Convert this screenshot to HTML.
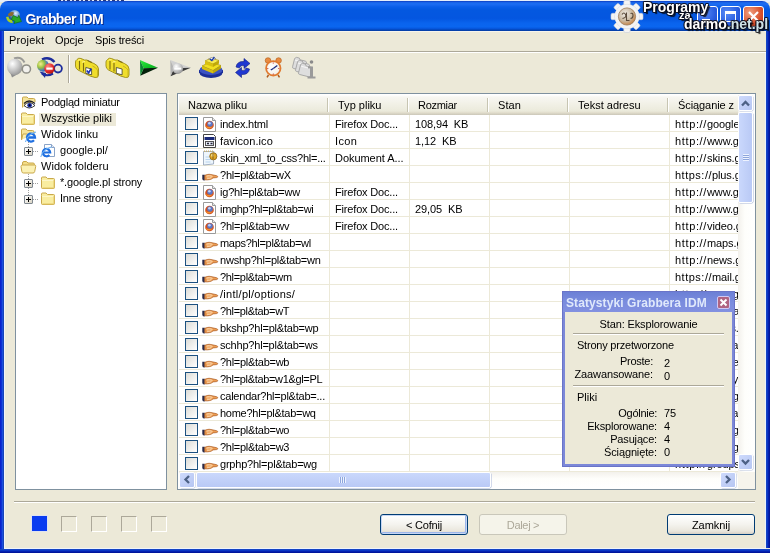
<!DOCTYPE html>
<html lang="pl"><head><meta charset="utf-8"><title>Grabber IDM</title>
<style>
*{box-sizing:border-box;margin:0;padding:0}
html,body{width:770px;height:553px;overflow:hidden;background:#ece9d8}
body{position:relative;font-family:"Liberation Sans","DejaVu Sans",sans-serif;font-size:11px;color:#000;line-height:13px}
.abs{position:absolute}
#win{position:absolute;left:0;top:0;width:770px;height:553px;background:#ece9d8;overflow:hidden;will-change:transform}
#topline{position:absolute;left:0;top:0;width:770px;height:2px;background:#e6eefa}
#topline i{position:absolute;left:58px;top:0;width:66px;height:1px;background:repeating-linear-gradient(to right,#26367a 0 3px,#dfe6f6 3px 5px,#3a4a8a 5px 7px,#e6eefa 7px 9px)}
#title{position:absolute;left:0;top:1px;width:770px;height:30px;border-radius:8px 8px 0 0;
background:linear-gradient(to bottom,#0c3cc0 0%,#1c6cf0 6%,#1a6af0 12%,#0a5ee8 20%,#0458e0 30%,#0456e0 58%,#0a64ee 74%,#0a66f0 86%,#0656dc 92%,#0444b4 97%,#033aa0 100%)}
#title .txt{position:absolute;left:25.500px;top:9.500px;font-weight:bold;font-size:14px;line-height:16px;color:#fff;text-shadow:1px 1px 0 #0a2a8a;white-space:nowrap}
#bl{position:absolute;left:0;top:31px;width:5px;height:517px;background:linear-gradient(to right,#0a22cc 0 1px,#0c32d4 1px 2px,#1c4edc 2px 3px,#1844b8 3px 4px,#f0f4fa 4px 5px)}
#br{position:absolute;right:0;top:31px;width:5px;height:517px;background:linear-gradient(to right,#eaf0fa 0 1px,#1444c4 1px 2px,#0a36c4 2px 3px,#0420b0 3px 4px,#00169c 4px 5px)}
#bb{position:absolute;left:0;bottom:0;width:770px;height:5px;background:linear-gradient(to bottom,transparent 0 1px,#1444c4 1px 2px,#0a36c4 2px 3px,#0420b0 3px 4px,#00169c 4px 5px)}
#bb:before{content:"";position:absolute;left:4px;top:0;width:762px;height:1px;background:#f0f4fa}
#bb:after{content:"";position:absolute;left:0;top:0;width:4px;height:1px;background:linear-gradient(to right,#0a22cc 0 1px,#0c32d4 1px 2px,#1c4edc 2px 3px,#1844b8 3px 4px)}
#menu{position:absolute;left:4px;top:31px;width:762px;height:20px;background:#ece9d8;border-top:1px solid #f6f4ec}
#menu>span{position:absolute;top:2px;font-size:11px;white-space:nowrap}
.hl1{position:absolute;height:1px;background:#aca899}
.hl2{position:absolute;height:1px;background:#fff}
.panel{position:absolute;background:#fff;border:1px solid #7f919f}
.trow{position:absolute;left:0;height:16px;white-space:nowrap}
.trow .t{position:absolute;top:1px;line-height:14px;font-size:11px;padding:0 2px}
.ti{position:absolute}
.t{position:absolute;height:13px;line-height:13px;padding:0 4px 0 2px;margin-top:1px;white-space:nowrap}
.t.sel:before{content:"";position:absolute;left:0;top:1px;width:100%;height:13px;background:#ece9d8;z-index:-1}
#tree{z-index:0}
.pm{position:absolute;width:9px;height:9px;border:1px solid #808890;border-radius:1px;background:linear-gradient(135deg,#fff,#d9d4c4)}
.pm:before{content:"";position:absolute;left:1px;top:3px;width:5px;height:1px;background:#000}
.pm:after{content:"";position:absolute;left:3px;top:1px;width:1px;height:5px;background:#000}
.dv{position:absolute;width:1px;background:repeating-linear-gradient(to bottom,#a0a0a0 0 1px,transparent 1px 2px)}
.dh{position:absolute;height:1px;background:repeating-linear-gradient(to right,#a0a0a0 0 1px,transparent 1px 2px)}
.row{position:absolute;left:0;width:559px;height:17px;border-bottom:1px solid #ece9d8}
.cb{position:absolute;left:6px;top:2px;width:13px;height:13px;border:1px solid #1c5180;background:linear-gradient(135deg,#dcdcd7,#fff)}
.fi{position:absolute;left:23px;top:1px}
.c{position:absolute;top:3px;line-height:13px;white-space:pre;overflow:hidden}
.c1{left:41px;width:108px}.c2{left:156px;width:73px}.c3{left:236px;width:73px}.c6{left:496px;width:62.500px}
.vl{position:absolute;top:0;width:1px;background:#ece9d8}
.hdr{position:absolute;left:0;top:0;height:20px;width:559px;background:linear-gradient(to bottom,#fff 0,#f8f7f2 10%,#ebeadb 80%,#e2decd 88%,#d6d2c2 94%,#cbc7b8 100%)}
.hdr>span{position:absolute;top:4px;white-space:nowrap}
.hdr i{position:absolute;top:3px;height:14px;width:2px;border-left:1px solid #c7c5b2;border-right:1px solid #fff}
.btn{position:absolute;height:21px;border:1px solid #003c74;border-radius:3px;background:linear-gradient(to bottom,#fff,#f4f3ee 50%,#e9e6dc 85%,#d6d0c5);text-align:center;line-height:20px;font-size:11px}
.sq{position:absolute;top:516px;width:16px;height:16px;border:1px solid;border-color:#aca899 #fff #fff #aca899}

.sbtn{position:absolute;width:15px;height:15px;border-radius:2px;background:linear-gradient(135deg,#cedafc,#b6c6f2);border:1px solid #fff;box-shadow:.5px .5px 0 #b8c4e0}
.sbtn svg{position:absolute;left:0;top:0}
.vtrack{position:absolute;left:559px;top:0;width:17px;height:377px;background:linear-gradient(to right,#f3f1ec,#fefefb 40%,#fff)}
.htrack{position:absolute;left:0;top:377px;width:559px;height:17px;background:linear-gradient(to bottom,#f3f1ec,#fefefb 40%,#fff)}
.thumb{position:absolute;border-radius:2px;border:1px solid #fff;background:linear-gradient(to right,#cad8fc,#b9c9f5);box-shadow:.5px .5px 0 #a8b6d8}
#pop{position:absolute;left:562px;top:291px;width:173px;height:176px;background:#7c88d8;border:1px solid #6a74c8}
#pop .cap{position:absolute;left:0;top:0;width:171px;height:20px;background:linear-gradient(to bottom,#6c80d6,#7a8cde 50%,#8290e0)}
#pop .cap b{position:absolute;left:3px;top:4px;font-size:12px;line-height:14px;color:#dfe8fb;white-space:nowrap}
#pop .body{position:absolute;left:2px;top:20px;width:167px;height:152px;background:#ece9d8}
#pop .x{position:absolute;left:154px;top:4px;width:13px;height:13px;border:1px solid #cfc8f4;border-radius:2px;background:#b06482}
.pl{position:absolute;white-space:nowrap;line-height:13px}
.pr{position:absolute;white-space:nowrap;line-height:13px;text-align:right}
.wb{position:absolute;top:6px;width:21px;height:21px;border:1px solid #fff;border-radius:3px;background:radial-gradient(circle at 30% 30%,#5a8cf6,#2a5ee0 60%,#1c48c4)}
.wm{position:absolute;z-index:6;font-weight:bold;color:#fff;white-space:nowrap;text-shadow:1px 0 0 rgba(10,10,20,.75),-1px 0 0 rgba(10,10,20,.75),0 1px 0 rgba(10,10,20,.75),0 -1px 0 rgba(10,10,20,.75),1px 1px 0 rgba(10,10,20,.6),-1px -1px 0 rgba(10,10,20,.5),1px -1px 0 rgba(10,10,20,.5),-1px 1px 0 rgba(10,10,20,.5),2px 2px 1px rgba(0,0,0,.8)}
</style></head><body>
<div id="win">
<div id="topline"><i></i></div>
<div id="title"><div class="txt"><span style="letter-spacing:-0.583px">Grabber IDM</span></div></div>

<div class="wb" style="left:697px"><i class="abs" style="left:4px;top:12px;width:8px;height:3px;background:#fff"></i></div>
<div class="wb" style="left:720px"><i class="abs" style="left:4px;top:4px;width:11px;height:11px;border:1px solid #fff;border-top-width:3px"></i></div>
<div class="wb" style="left:743px;background:radial-gradient(circle at 30% 30%,#f0a080,#d8502c 60%,#b83818)"><svg width="19" height="19" viewBox="0 0 19 19"><path d="M5 5l9 9M14 5l-9 9" stroke="#fff" stroke-width="2.200"/></svg></div>
<svg class="abs" style="left:610px;top:0;z-index:5" width="34" height="33" viewBox="-17 -16.500 34 33">
<defs><radialGradient id="gCoin" cx=".4" cy=".35" r=".75"><stop offset="0" stop-color="#f2efe8"/><stop offset=".55" stop-color="#c9b8a0"/><stop offset=".85" stop-color="#c88a50"/><stop offset="1" stop-color="#8a5a30"/></radialGradient></defs>
<g fill="#f4f4f4" stroke="#c8ccd8" stroke-width=".6">
<g id="teeth"><rect x="-3.200" y="-16" width="6.400" height="32" rx="1.500"/><rect x="-16" y="-3.200" width="32" height="6.400" rx="1.500"/></g>
<use href="#teeth" transform="rotate(45)"/>
<circle r="12.200"/></g>
<circle r="12" fill="#f4f4f4"/>
<circle r="8.600" fill="url(#gCoin)" stroke="#9a7a58" stroke-width=".8"/>
<path d="M-5-2q2-3 3.500 0t-3 4M-.5-4v8l3 0M3.500-3q2.500-1 2.500 2t-2.500 3" stroke="#5a4a3a" stroke-width="1.100" fill="none"/>
</svg>
<span class="wm" style="left:643px;top:-1px;font-size:14px;line-height:16px">Programy</span>
<span class="wm" style="left:679px;top:10px;font-size:11px;line-height:11px">za</span>
<span class="wm" style="left:684px;top:16px;font-size:14px;line-height:16px">darmo<span style="color:#cfe2e6">.net.pl</span></span>
<svg class="abs" style="left:5px;top:9px" width="18" height="18" viewBox="0 0 18 18">
<defs><radialGradient id="gTi" cx=".6" cy=".3" r=".7"><stop offset="0" stop-color="#e8f4ff"/><stop offset=".4" stop-color="#7aa8d8"/><stop offset="1" stop-color="#2a5088"/></radialGradient></defs>
<circle cx="9.500" cy="6.500" r="5.500" fill="url(#gTi)"/>
<path d="M3 5q3-3 6-1.500l-1 3q-3 1-5 0z" fill="#8a6a30"/>
<path d="M1 8q1 6 7 6l-1-3q-3 0-3.500-3.500z" fill="#a8d020"/>
<path d="M7 8h5v-2.500l5 4.500-6 5v-2.500h-4z" fill="#28a828" stroke="#107010" stroke-width=".6" transform="rotate(25 11 10)"/>
</svg>
<div id="bl"></div><div id="br"></div><div id="bb"></div>
<div id="menu"><span style="left:5px"><span style="letter-spacing:0.150px">Projekt</span></span><span style="left:51px"><span style="letter-spacing:-0.050px">Opcje</span></span><span style="left:91px"><span style="letter-spacing:-0.159px">Spis treści</span></span></div>
<div class="hl1" style="left:4px;top:51px;width:762px"></div><div class="hl2" style="left:4px;top:52px;width:762px"></div>

<!-- toolbar -->
<svg class="abs" style="left:0;top:53px" width="340" height="36" viewBox="0 53 340 36">
<defs>
<radialGradient id="gSph" cx=".35" cy=".3" r=".8"><stop offset="0" stop-color="#fff"/><stop offset=".5" stop-color="#c8c8c8"/><stop offset="1" stop-color="#8c8c8c"/></radialGradient>
<radialGradient id="gGlobe" cx=".3" cy=".35" r=".8"><stop offset="0" stop-color="#f4f090"/><stop offset=".4" stop-color="#9ac040"/><stop offset=".75" stop-color="#3a70c8"/><stop offset="1" stop-color="#203a90"/></radialGradient>
<radialGradient id="gRed" cx=".35" cy=".3" r=".8"><stop offset="0" stop-color="#ff8a80"/><stop offset=".6" stop-color="#e02828"/><stop offset="1" stop-color="#a81010"/></radialGradient>
<linearGradient id="gGreen" x1="0" y1="0" x2="1" y2="1"><stop offset="0" stop-color="#30f040"/><stop offset="1" stop-color="#00a818"/></linearGradient>
<radialGradient id="gClock" cx=".4" cy=".4" r=".7"><stop offset="0" stop-color="#fff"/><stop offset=".8" stop-color="#f4f0e8"/><stop offset="1" stop-color="#e8c8a0"/></radialGradient>
<g id="fold"><path d="M0 1.500l1.500-1.500h3l1 1.500h5.500q1.500 0 1.500 1.500v7q0 1.500-1.500 1.500h-9.500q-1.500 0-1.500-1.500z" fill="#f2da2a" stroke="#a88c10" stroke-width=".8"/><path d="M1 3.200h10.500" stroke="#fbf08a" stroke-width="1"/></g>
<g id="gfold"><path d="M0 1.500l1.500-1.500h3l1 1.500h5.500q1.500 0 1.500 1.500v7q0 1.500-1.500 1.500h-9.500q-1.500 0-1.500-1.500z" fill="#dedede" stroke="#a0a0a0" stroke-width=".8"/><path d="M1 3.200h10.500" stroke="#f6f6f6" stroke-width="1"/></g>
</defs>
<!-- 1 gray globe + magnifier -->
<path d="M9.500 71l2.500 6.500 5-3z" fill="#8e8e8e"/>
<path d="M14 58.500q7-2.500 10.500 4" stroke="#9a9a96" stroke-width="2" fill="none"/><ellipse cx="14.800" cy="67" rx="7.800" ry="8.300" fill="url(#gSph)"/>
<circle cx="26.400" cy="69" r="4.100" fill="#f2f1ec" stroke="#8e8e86" stroke-width="1.500"/>
<!-- 2 globe + stop + magnifier -->
<path d="M42 59.500q7-3.500 12.500 2.500" stroke="#1c2c9c" stroke-width="2.400" fill="none"/>
<circle cx="43" cy="65.800" r="6" fill="url(#gGlobe)"/>
<circle cx="58" cy="68.600" r="3.900" fill="#e8e6dc" stroke="#1c2c9c" stroke-width="1.800"/>
<path d="M42 73.500q5 3.500 11 0" stroke="#1c2c9c" stroke-width="2.200" fill="none"/>
<path d="M39.500 71.500l5.500 6.500 1-5z" fill="#1c2c9c"/>
<circle cx="49.500" cy="68.500" r="5.200" fill="url(#gRed)"/>
<rect x="46.300" y="67.500" width="6.400" height="2.200" fill="#fff"/>
<!-- separator -->
<rect x="68" y="55" width="1" height="28" fill="#aca899"/><rect x="69" y="55" width="1" height="28" fill="#fff"/>
<!-- 3 folders + check -->
<g id="stack">
<path d="M77 59.500q1.500-2 4-1l3.500 1.500 2.500 0 3 2 4 1.500q4.500 2 4.500 5.500v6q0 3-3.500 2.500l-5-1.500-4-2-4-2-4-2q-2.500-1.500-2.500-4v-4q0-1.500 1.500-2.500z" fill="#f0de2c" stroke="#9c8c14" stroke-width=".9"/>
<path d="M79.500 61v8.500M83.500 63v8.500M87.500 60.500l4.500 2" stroke="#7c6c10" stroke-width="1.100" fill="none"/>
<path d="M78 60.500q1-1.500 3-.8M82 62.500q1-1.500 3-.8" stroke="#fbf392" stroke-width="1" fill="none"/>
<path d="M92.500 66q3.500 1.500 5 4v6" stroke="#c8b41c" stroke-width="1" fill="none"/>
</g>
<path d="M85.800 67.500l5.800 1.500v5.800l-5.800-1.500z" fill="#fff" stroke="#3a3a30" stroke-width=".8"/>
<path d="M86.800 70.500l1.800 2.300 2.700-4.300" stroke="#1c34b8" stroke-width="1.600" fill="none"/>
<!-- 4 folders + square -->
<use href="#stack" transform="translate(30.500,0)"/>
<path d="M116.300 67.500l5.800 1.500v5.800l-5.800-1.500z" fill="#fff" stroke="#3a3a30" stroke-width=".8"/>
<!-- 5 play green -->
<path d="M140 60L158 67.800 143.700 68.200z" fill="url(#gGreen)"/>
<path d="M143.700 68.200L158 67.800 140.300 75.800z" fill="#04200a"/>
<path d="M140 60L143.700 68.200 140.300 75.800z" fill="#0a8a30"/>
<!-- 6 play gray -->
<path d="M170.300 60L190.800 67.800 174 68.200z" fill="#d0d0d0"/>
<path d="M174 68.200L190.800 67.800 170.500 76.300z" fill="#3a3a3a"/>
<path d="M170.300 60L174 68.200 170.500 76.300z" fill="#b4b4b4"/>
<circle cx="177.800" cy="68.600" r="5.300" fill="url(#gSph)"/>
<rect x="174.300" y="67.600" width="7" height="2" fill="#fff"/>
<!-- 7 stack on blue base -->
<ellipse cx="211" cy="73" rx="11.500" ry="5" fill="#1c2f98"/>
<path d="M199.500 70v3M222.500 70v3" stroke="#1c2f98"/>
<ellipse cx="211" cy="70" rx="11.500" ry="5" fill="#3a52c4"/>
<path d="M202 66l8-4 11 3.500-8 5z" fill="#f2e020" stroke="#a89010" stroke-width=".7"/>
<path d="M202 66v3l11 4.500v-3z" fill="#d8c010"/><path d="M213 70.500v3l8-5v-3z" fill="#c0a808"/>
<path d="M205 61l6-3 8 2.500-6 3.500z" fill="#f8ec50" stroke="#a89010" stroke-width=".7"/>
<path d="M205 61v3l8 3v-3z" fill="#d8c010"/><path d="M213 64v3l6-3.500v-3z" fill="#c0a808"/>
<path d="M208.500 59l3.500-1.500 4 1.200-3.500 2z" fill="#fff" stroke="#666" stroke-width=".5"/>
<path d="M210 59l1.800 1.600 2.600-3.600" stroke="#1838a8" stroke-width="1.300" fill="none"/>
<!-- 8 refresh -->
<path d="M236 67q1-6 8-5.500v-3l6 5-6 5v-3q-4-.5-4.500 2.500z" fill="#2038d0" stroke="#101c80" stroke-width=".6"/>
<path d="M249.500 69q-1 6-8 5.500v3l-6-5 6-5v3q4 .5 4.500-2.500z" fill="#2038d0" stroke="#101c80" stroke-width=".6"/>
<!-- 9 alarm clock -->
<circle cx="268" cy="60.500" r="2.800" fill="#e88a40" stroke="#b05a18" stroke-width=".6"/>
<circle cx="278.600" cy="60.500" r="2.800" fill="#e88a40" stroke="#b05a18" stroke-width=".6"/>
<path d="M268.500 75l-1.500 2.300M278 75l1.500 2.300" stroke="#b05a18" stroke-width="1.500"/>
<circle cx="273.300" cy="68.300" r="7.200" fill="url(#gClock)" stroke="#e07a30" stroke-width="1.800"/>
<path d="M273.300 68.500l4-3" stroke="#1a2a80" stroke-width="1.300"/><path d="M273.300 68.500l-2.500 1.500" stroke="#1a2a80" stroke-width="1.300"/>
<circle cx="273.300" cy="63" r=".6" fill="#c02020"/><circle cx="273.300" cy="74" r=".6" fill="#c02020"/><circle cx="267.800" cy="68.500" r=".6" fill="#c02020"/><circle cx="278.800" cy="68.500" r=".6" fill="#c02020"/>
<!-- 10 gray folders + i -->
<g transform="translate(295,57) rotate(14)"><use href="#gfold"/></g>
<g transform="translate(298,60) rotate(14)"><use href="#gfold"/></g>
<g transform="translate(301,63) rotate(14)"><use href="#gfold"/></g>
<circle cx="311.500" cy="62" r="1.800" fill="#8a8a8a"/>
<path d="M308 66.500h5v10h2.500v2h-8v-2h2.500v-8h-2z" fill="#9a9a9a"/>
</svg>


<!-- tree -->
<div class="panel" id="tree" style="left:15px;top:93px;width:152px;height:397px"><div class="abs" style="left:1px;top:1px;width:149px;height:394px">
<svg class="ti" style="left:4px;top:0px" width="16" height="16" viewBox="0 0 16 16"><path d="M1.500 12.500v-9.500q0-1 1-1h3.500l1.500 1.500h5q1.500 0 1.500 1.500v2" fill="#f5e49a" stroke="#c9a84a"/><path d="M3 10.500q5-6 11 0q-6 5-11 0z" fill="#fff" stroke="#222" stroke-width=".9"/><circle cx="8.600" cy="10.200" r="2.300" fill="#1c2fa8"/><circle cx="8.600" cy="10.200" r="1" fill="#000"/><path d="M3 8.500q5-5 11 0" stroke="#222" fill="none" stroke-width="1.200"/></svg>
<span class="t" style="left:22px;top:0px"><span style="letter-spacing:-0.241px">Podgląd miniatur</span></span>
<svg class="ti" style="left:3px;top:16px" width="16" height="16" viewBox="0 0 16 16"><path d="M1.500 4.500v-1.500q0-1 1-1h3.500l1.500 1.500h6q1 0 1 1v8q0 1-1 1h-11q-1 0-1-1z" fill="#f9eda0" stroke="#c9a84a"/><path d="M2 5.500h12" stroke="#fdf6c8"/><path d="M14 5v7.500q0 .5-.5.500h-11" stroke="#e3c766" fill="none"/></svg>
<span class="t sel" style="left:22px;top:16px"><span style="letter-spacing:-0.048px">Wszystkie pliki</span></span>
<svg class="ti" style="left:3px;top:32px" width="17" height="16" viewBox="0 0 17 16"><path d="M1.500 12.500v-9.500q0-1 1-1h3.500l1.500 1.500h5q1.500 0 1.500 1.500v3" fill="#f5e49a" stroke="#c9a84a"/><path d="M1.500 13l1.500-6h4" fill="#fbf1b4" stroke="#c9a84a"/><circle cx="11" cy="10.500" r="4.300" fill="#fff" opacity=".85"/><path d="M14 13.200A4 4 0 1 1 15 10.500L7.500 10.500" stroke="#1f6fe0" stroke-width="2.300" fill="none"/><path d="M5.500 15q1.500-7.500 10.500-10" stroke="#6ab0f4" fill="none" stroke-width="1.100"/></svg>
<span class="t" style="left:22px;top:32px"><span style="letter-spacing:0.086px">Widok linku</span></span>
<span class="dv" style="left:11px;top:47px;height:5px"></span><span class="dh" style="left:16px;top:56px;width:6px"></span>
<span class="pm" style="left:7px;top:52px"></span>
<svg class="ti" style="left:23px;top:48px" width="16" height="16" viewBox="0 0 16 16"><path d="M4.500 1.500h7l3 3v9h-10z" fill="#fff" stroke="#8aa4c8"/><path d="M11.500 1.500v3h3" fill="#dfe8f6" stroke="#8aa4c8"/><circle cx="6.500" cy="9.500" r="4" fill="#fff" opacity=".85"/><path d="M9.300 12A3.700 3.700 0 1 1 10.200 9.500L3 9.500" stroke="#1f6fe0" stroke-width="2.200" fill="none"/><path d="M.8 14q1.500-7.500 10.500-10" stroke="#6ab0f4" fill="none" stroke-width="1.100"/></svg>
<span class="t" style="left:41px;top:48px"><span style="letter-spacing:0.008px">google.pl/</span></span>
<svg class="ti" style="left:3px;top:64px" width="17" height="16" viewBox="0 0 17 16"><path d="M2.500 12.500v-8.500q0-1.500 1.500-1.500h2.500l1.500 1.500h5q1.500 0 1.500 1.500v1" fill="#f3dc86" stroke="#c9a84a"/><path d="M1 7.500q0-1.500 1.500-1.500h12q1.500 0 1.200 1.500l-1 5q-.3 1.500-1.700 1.500h-9.500q-1.500 0-1.700-1.500z" fill="#fbf1b4" stroke="#c9a84a"/></svg>
<span class="t" style="left:22px;top:64px"><span style="letter-spacing:0.026px">Widok folderu</span></span>
<span class="dv" style="left:11px;top:79px;height:5px"></span><span class="dh" style="left:16px;top:88px;width:6px"></span>
<span class="pm" style="left:7px;top:84px"></span>
<svg class="ti" style="left:23px;top:80px" width="16" height="16" viewBox="0 0 16 16"><path d="M1.500 4.500v-1.500q0-1 1-1h3.500l1.500 1.500h6q1 0 1 1v8q0 1-1 1h-11q-1 0-1-1z" fill="#f9eda0" stroke="#c9a84a"/><path d="M2 5.500h12" stroke="#fdf6c8"/><path d="M14 5v7.500q0 .5-.5.500h-11" stroke="#e3c766" fill="none"/></svg>
<span class="t" style="left:41px;top:80px"><span style="letter-spacing:-0.156px">*.google.pl strony</span></span>
<span class="dv" style="left:11px;top:93px;height:7px"></span><span class="dh" style="left:16px;top:104px;width:6px"></span>
<span class="pm" style="left:7px;top:100px"></span>
<svg class="ti" style="left:23px;top:96px" width="16" height="16" viewBox="0 0 16 16"><path d="M1.500 4.500v-1.500q0-1 1-1h3.500l1.500 1.500h6q1 0 1 1v8q0 1-1 1h-11q-1 0-1-1z" fill="#f9eda0" stroke="#c9a84a"/><path d="M2 5.500h12" stroke="#fdf6c8"/><path d="M14 5v7.500q0 .5-.5.500h-11" stroke="#e3c766" fill="none"/></svg>
<span class="t" style="left:41px;top:96px"><span style="letter-spacing:-0.202px">Inne strony</span></span>
</div></div>

<!-- list -->
<div class="panel" id="list" style="left:177px;top:93px;width:579px;height:397px;overflow:hidden"><div class="abs" style="left:1px;top:1px;width:576px;height:394px;overflow:hidden">
 <div class="hdr">
  <span style="left:9px"><span style="letter-spacing:-0.019px">Nazwa pliku</span></span><span style="left:159px"><span style="letter-spacing:0.009px">Typ pliku</span></span><span style="left:239px"><span style="letter-spacing:-0.308px">Rozmiar</span></span><span style="left:319px"><span style="letter-spacing:0.065px">Stan</span></span><span style="left:399px"><span style="letter-spacing:0.019px">Tekst adresu</span></span><span style="left:499px"><span style="letter-spacing:-0.080px">Ściąganie z</span></span>
  <i style="left:148px"></i><i style="left:228px"></i><i style="left:308px"></i><i style="left:388px"></i><i style="left:488px"></i>
 </div>
 <div class="vl" style="left:150px;top:20px;height:357px"></div><div class="vl" style="left:230px;top:20px;height:357px"></div><div class="vl" style="left:310px;top:20px;height:357px"></div><div class="vl" style="left:390px;top:20px;height:357px"></div><div class="vl" style="left:490px;top:20px;height:357px"></div>
 <div id="rows" class="abs" style="left:0;top:20px;width:559px;height:357px;overflow:hidden">
<div class="row" style="top:0px"><span class="cb"></span><svg class="fi" width="16" height="16" viewBox="0 0 16 16"><path d="M1.500 1.500h9l3 3v11h-12z" fill="#fff" stroke="#9a9a9a"/><path d="M10.500 1.500v3h3" fill="#e8e8e8" stroke="#9a9a9a"/><circle cx="7.500" cy="9" r="4.300" fill="#d2501e"/><circle cx="8" cy="8" r="2.800" fill="#5a78c8"/><circle cx="7.400" cy="7.200" r="1.300" fill="#c4d2f2"/><path d="M3.300 10c1 3 5.500 3.500 8 0c-1.500 1.200-5.500 1.500-8 0z" fill="#f09030"/></svg><span class="c c1"><span style="letter-spacing:-0.224px">index.html</span></span><span class="c c2"><span style="letter-spacing:-0.172px">Firefox Doc...</span></span><span class="c c3"><span style="letter-spacing:-0.114px">108,94  KB</span></span><span class="c c6"><span style="letter-spacing:0.638px">http://</span><span style="letter-spacing:-.1px">google.pl/</span></span></div>
<div class="row" style="top:17px"><span class="cb"></span><svg class="fi" width="16" height="16" viewBox="0 0 16 16"><path d="M1.500 1.500h10l2 2v11h-12z" fill="#fff" stroke="#444"/><rect x="2.500" y="4" width="10" height="3" fill="#1a2a7a"/><rect x="3.500" y="8.500" width="8" height="4" fill="#e4e9f6" stroke="#555"/><path d="M5 10.500h2M8.500 10.500h2" stroke="#223" stroke-width="1.500"/></svg><span class="c c1"><span style="letter-spacing:0.083px">favicon.ico</span></span><span class="c c2"><span style="letter-spacing:0.351px">Icon</span></span><span class="c c3"><span style="letter-spacing:-0.100px">1,12  KB</span></span><span class="c c6"><span style="letter-spacing:0.638px">http://</span><span style="letter-spacing:-.1px">www.google.pl/</span></span></div>
<div class="row" style="top:34px"><span class="cb"></span><svg class="fi" width="16" height="16" viewBox="0 0 16 16"><path d="M1.500 1.500h10.500l-.5 12.500-10 1z" fill="#eef6fd" stroke="#9aa8bc" stroke-width=".9"/><path d="M2 1.300h10" stroke="#c8b070" stroke-width="1.400" stroke-dasharray="1 1"/><path d="M3.500 7h4M3.500 9.500h6M3.500 12h5" stroke="#b8d4ee" stroke-width="1"/><circle cx="11.300" cy="6.300" r="3.600" fill="#e0a828" stroke="#8a6214" stroke-width=".8"/><circle cx="10.500" cy="5.300" r="1.500" fill="#f8e088"/><path d="M11 3.500v5.500" stroke="#7a5410" stroke-width=".9"/></svg><span class="c c1"><span style="letter-spacing:-0.244px">skin_xml_to_css?hl=...</span></span><span class="c c2"><span style="letter-spacing:-0.046px">Dokument A...</span></span><span class="c c6"><span style="letter-spacing:0.638px">http://</span><span style="letter-spacing:-.1px">skins.gmodules.com/</span></span></div>
<div class="row" style="top:51px"><span class="cb"></span><svg class="fi" width="17" height="16" viewBox="0 0 17 16"><path d="M.3 7.800h2.500v5.700q-2.500 0-2.500-1.500z" fill="#2a2a48"/><path d="M2.800 8.300c2-.8 4-1.300 6-.8l5.800 1.200c1.500.4 1.400 1.700 0 1.900l-3.600.3c-1.200 1.600-5 2.200-8.200 1.900z" fill="#ee9c50" stroke="#a8561c" stroke-width=".7"/><path d="M4.500 9.200c2-.6 4-.5 6 .2M5 11.200c1.500.2 3 0 4.500-.5" stroke="#fde6c8" stroke-width=".9" fill="none"/></svg><span class="c c1"><span style="letter-spacing:-0.238px">?hl=pl&amp;tab=wX</span></span><span class="c c6"><span style="letter-spacing:0.496px">https://</span><span style="letter-spacing:-.1px">plus.google.com/</span></span></div>
<div class="row" style="top:68px"><span class="cb"></span><svg class="fi" width="16" height="16" viewBox="0 0 16 16"><path d="M1.500 1.500h9l3 3v11h-12z" fill="#fff" stroke="#9a9a9a"/><path d="M10.500 1.500v3h3" fill="#e8e8e8" stroke="#9a9a9a"/><circle cx="7.500" cy="9" r="4.300" fill="#d2501e"/><circle cx="8" cy="8" r="2.800" fill="#5a78c8"/><circle cx="7.400" cy="7.200" r="1.300" fill="#c4d2f2"/><path d="M3.300 10c1 3 5.500 3.500 8 0c-1.500 1.200-5.500 1.500-8 0z" fill="#f09030"/></svg><span class="c c1"><span style="letter-spacing:-0.211px">ig?hl=pl&amp;tab=ww</span></span><span class="c c2"><span style="letter-spacing:-0.172px">Firefox Doc...</span></span><span class="c c6"><span style="letter-spacing:0.638px">http://</span><span style="letter-spacing:-.1px">www.google.pl/</span></span></div>
<div class="row" style="top:85px"><span class="cb"></span><svg class="fi" width="16" height="16" viewBox="0 0 16 16"><path d="M1.500 1.500h9l3 3v11h-12z" fill="#fff" stroke="#9a9a9a"/><path d="M10.500 1.500v3h3" fill="#e8e8e8" stroke="#9a9a9a"/><circle cx="7.500" cy="9" r="4.300" fill="#d2501e"/><circle cx="8" cy="8" r="2.800" fill="#5a78c8"/><circle cx="7.400" cy="7.200" r="1.300" fill="#c4d2f2"/><path d="M3.300 10c1 3 5.500 3.500 8 0c-1.500 1.200-5.500 1.500-8 0z" fill="#f09030"/></svg><span class="c c1"><span style="letter-spacing:-0.310px">imghp?hl=pl&amp;tab=wi</span></span><span class="c c2"><span style="letter-spacing:-0.172px">Firefox Doc...</span></span><span class="c c3"><span style="letter-spacing:-0.092px">29,05  KB</span></span><span class="c c6"><span style="letter-spacing:0.638px">http://</span><span style="letter-spacing:-.1px">www.google.pl/</span></span></div>
<div class="row" style="top:102px"><span class="cb"></span><svg class="fi" width="16" height="16" viewBox="0 0 16 16"><path d="M1.500 1.500h9l3 3v11h-12z" fill="#fff" stroke="#9a9a9a"/><path d="M10.500 1.500v3h3" fill="#e8e8e8" stroke="#9a9a9a"/><circle cx="7.500" cy="9" r="4.300" fill="#d2501e"/><circle cx="8" cy="8" r="2.800" fill="#5a78c8"/><circle cx="7.400" cy="7.200" r="1.300" fill="#c4d2f2"/><path d="M3.300 10c1 3 5.500 3.500 8 0c-1.500 1.200-5.500 1.500-8 0z" fill="#f09030"/></svg><span class="c c1"><span style="letter-spacing:-0.229px">?hl=pl&amp;tab=wv</span></span><span class="c c2"><span style="letter-spacing:-0.172px">Firefox Doc...</span></span><span class="c c6"><span style="letter-spacing:0.638px">http://</span><span style="letter-spacing:-.1px">video.google.pl/</span></span></div>
<div class="row" style="top:119px"><span class="cb"></span><svg class="fi" width="17" height="16" viewBox="0 0 17 16"><path d="M.3 7.800h2.500v5.700q-2.500 0-2.500-1.500z" fill="#2a2a48"/><path d="M2.800 8.300c2-.8 4-1.300 6-.8l5.800 1.200c1.500.4 1.400 1.700 0 1.900l-3.600.3c-1.200 1.600-5 2.200-8.200 1.900z" fill="#ee9c50" stroke="#a8561c" stroke-width=".7"/><path d="M4.500 9.200c2-.6 4-.5 6 .2M5 11.200c1.500.2 3 0 4.500-.5" stroke="#fde6c8" stroke-width=".9" fill="none"/></svg><span class="c c1"><span style="letter-spacing:-0.301px">maps?hl=pl&amp;tab=wl</span></span><span class="c c6"><span style="letter-spacing:0.638px">http://</span><span style="letter-spacing:-.1px">maps.google.pl/</span></span></div>
<div class="row" style="top:136px"><span class="cb"></span><svg class="fi" width="17" height="16" viewBox="0 0 17 16"><path d="M.3 7.800h2.500v5.700q-2.500 0-2.500-1.500z" fill="#2a2a48"/><path d="M2.800 8.300c2-.8 4-1.300 6-.8l5.800 1.200c1.500.4 1.400 1.700 0 1.900l-3.600.3c-1.200 1.600-5 2.200-8.200 1.900z" fill="#ee9c50" stroke="#a8561c" stroke-width=".7"/><path d="M4.500 9.200c2-.6 4-.5 6 .2M5 11.200c1.500.2 3 0 4.500-.5" stroke="#fde6c8" stroke-width=".9" fill="none"/></svg><span class="c c1"><span style="letter-spacing:-0.215px">nwshp?hl=pl&amp;tab=wn</span></span><span class="c c6"><span style="letter-spacing:0.638px">http://</span><span style="letter-spacing:-.1px">news.google.pl/</span></span></div>
<div class="row" style="top:153px"><span class="cb"></span><svg class="fi" width="17" height="16" viewBox="0 0 17 16"><path d="M.3 7.800h2.500v5.700q-2.500 0-2.500-1.500z" fill="#2a2a48"/><path d="M2.800 8.300c2-.8 4-1.300 6-.8l5.800 1.200c1.500.4 1.400 1.700 0 1.900l-3.600.3c-1.200 1.600-5 2.200-8.200 1.900z" fill="#ee9c50" stroke="#a8561c" stroke-width=".7"/><path d="M4.500 9.200c2-.6 4-.5 6 .2M5 11.200c1.500.2 3 0 4.500-.5" stroke="#fde6c8" stroke-width=".9" fill="none"/></svg><span class="c c1"><span style="letter-spacing:-0.310px">?hl=pl&amp;tab=wm</span></span><span class="c c6"><span style="letter-spacing:0.496px">https://</span><span style="letter-spacing:-.1px">mail.google.com/</span></span></div>
<div class="row" style="top:170px"><span class="cb"></span><svg class="fi" width="17" height="16" viewBox="0 0 17 16"><path d="M.3 7.800h2.500v5.700q-2.500 0-2.500-1.500z" fill="#2a2a48"/><path d="M2.800 8.300c2-.8 4-1.300 6-.8l5.800 1.200c1.500.4 1.400 1.700 0 1.900l-3.600.3c-1.200 1.600-5 2.200-8.200 1.900z" fill="#ee9c50" stroke="#a8561c" stroke-width=".7"/><path d="M4.500 9.200c2-.6 4-.5 6 .2M5 11.200c1.500.2 3 0 4.500-.5" stroke="#fde6c8" stroke-width=".9" fill="none"/></svg><span class="c c1"><span style="letter-spacing:0.287px">/intl/pl/options/</span></span><span class="c c6"><span style="letter-spacing:0.638px">http://</span><span style="letter-spacing:-.1px">www.google.pl/</span></span></div>
<div class="row" style="top:187px"><span class="cb"></span><svg class="fi" width="17" height="16" viewBox="0 0 17 16"><path d="M.3 7.800h2.500v5.700q-2.500 0-2.500-1.500z" fill="#2a2a48"/><path d="M2.800 8.300c2-.8 4-1.300 6-.8l5.800 1.200c1.500.4 1.400 1.700 0 1.900l-3.600.3c-1.200 1.600-5 2.200-8.200 1.900z" fill="#ee9c50" stroke="#a8561c" stroke-width=".7"/><path d="M4.500 9.200c2-.6 4-.5 6 .2M5 11.200c1.500.2 3 0 4.500-.5" stroke="#fde6c8" stroke-width=".9" fill="none"/></svg><span class="c c1"><span style="letter-spacing:-0.322px">?hl=pl&amp;tab=wT</span></span><span class="c c6"><span style="letter-spacing:0.638px">http://</span><span style="letter-spacing:-.1px">translate.google.pl/</span></span></div>
<div class="row" style="top:204px"><span class="cb"></span><svg class="fi" width="17" height="16" viewBox="0 0 17 16"><path d="M.3 7.800h2.500v5.700q-2.500 0-2.500-1.500z" fill="#2a2a48"/><path d="M2.800 8.300c2-.8 4-1.300 6-.8l5.800 1.200c1.500.4 1.400 1.700 0 1.900l-3.600.3c-1.200 1.600-5 2.200-8.200 1.900z" fill="#ee9c50" stroke="#a8561c" stroke-width=".7"/><path d="M4.500 9.200c2-.6 4-.5 6 .2M5 11.200c1.500.2 3 0 4.500-.5" stroke="#fde6c8" stroke-width=".9" fill="none"/></svg><span class="c c1"><span style="letter-spacing:-0.202px">bkshp?hl=pl&amp;tab=wp</span></span><span class="c c6"><span style="letter-spacing:0.638px">http://</span><span style="letter-spacing:-.1px">books.google.pl/</span></span></div>
<div class="row" style="top:221px"><span class="cb"></span><svg class="fi" width="17" height="16" viewBox="0 0 17 16"><path d="M.3 7.800h2.500v5.700q-2.500 0-2.500-1.500z" fill="#2a2a48"/><path d="M2.800 8.300c2-.8 4-1.300 6-.8l5.800 1.200c1.500.4 1.400 1.700 0 1.900l-3.600.3c-1.200 1.600-5 2.200-8.200 1.900z" fill="#ee9c50" stroke="#a8561c" stroke-width=".7"/><path d="M4.500 9.200c2-.6 4-.5 6 .2M5 11.200c1.500.2 3 0 4.500-.5" stroke="#fde6c8" stroke-width=".9" fill="none"/></svg><span class="c c1"><span style="letter-spacing:-0.206px">schhp?hl=pl&amp;tab=ws</span></span><span class="c c6"><span style="letter-spacing:0.638px">http://</span><span style="letter-spacing:-.1px">scholar.google.pl/</span></span></div>
<div class="row" style="top:238px"><span class="cb"></span><svg class="fi" width="17" height="16" viewBox="0 0 17 16"><path d="M.3 7.800h2.500v5.700q-2.500 0-2.500-1.500z" fill="#2a2a48"/><path d="M2.800 8.300c2-.8 4-1.300 6-.8l5.800 1.200c1.500.4 1.400 1.700 0 1.900l-3.600.3c-1.200 1.600-5 2.200-8.200 1.900z" fill="#ee9c50" stroke="#a8561c" stroke-width=".7"/><path d="M4.500 9.200c2-.6 4-.5 6 .2M5 11.200c1.500.2 3 0 4.500-.5" stroke="#fde6c8" stroke-width=".9" fill="none"/></svg><span class="c c1"><span style="letter-spacing:-0.275px">?hl=pl&amp;tab=wb</span></span><span class="c c6"><span style="letter-spacing:0.638px">http://</span><span style="letter-spacing:-.1px">blogsearch.google.pl/</span></span></div>
<div class="row" style="top:255px"><span class="cb"></span><svg class="fi" width="17" height="16" viewBox="0 0 17 16"><path d="M.3 7.800h2.500v5.700q-2.500 0-2.500-1.500z" fill="#2a2a48"/><path d="M2.800 8.300c2-.8 4-1.300 6-.8l5.800 1.200c1.500.4 1.400 1.700 0 1.900l-3.600.3c-1.200 1.600-5 2.200-8.200 1.900z" fill="#ee9c50" stroke="#a8561c" stroke-width=".7"/><path d="M4.500 9.200c2-.6 4-.5 6 .2M5 11.200c1.500.2 3 0 4.500-.5" stroke="#fde6c8" stroke-width=".9" fill="none"/></svg><span class="c c1"><span style="letter-spacing:-0.335px">?hl=pl&amp;tab=w1&amp;gl=PL</span></span><span class="c c6"><span style="letter-spacing:0.638px">http://</span><span style="letter-spacing:-.1px">www.youtube.com/</span></span></div>
<div class="row" style="top:272px"><span class="cb"></span><svg class="fi" width="17" height="16" viewBox="0 0 17 16"><path d="M.3 7.800h2.500v5.700q-2.500 0-2.500-1.500z" fill="#2a2a48"/><path d="M2.800 8.300c2-.8 4-1.300 6-.8l5.800 1.200c1.500.4 1.400 1.700 0 1.900l-3.600.3c-1.200 1.600-5 2.200-8.200 1.900z" fill="#ee9c50" stroke="#a8561c" stroke-width=".7"/><path d="M4.500 9.200c2-.6 4-.5 6 .2M5 11.200c1.500.2 3 0 4.500-.5" stroke="#fde6c8" stroke-width=".9" fill="none"/></svg><span class="c c1"><span style="letter-spacing:-0.232px">calendar?hl=pl&amp;tab=...</span></span><span class="c c6"><span style="letter-spacing:0.638px">http://</span><span style="letter-spacing:-.1px">www.google.com/</span></span></div>
<div class="row" style="top:289px"><span class="cb"></span><svg class="fi" width="17" height="16" viewBox="0 0 17 16"><path d="M.3 7.800h2.500v5.700q-2.500 0-2.500-1.500z" fill="#2a2a48"/><path d="M2.800 8.300c2-.8 4-1.300 6-.8l5.800 1.200c1.500.4 1.400 1.700 0 1.900l-3.600.3c-1.200 1.600-5 2.200-8.200 1.900z" fill="#ee9c50" stroke="#a8561c" stroke-width=".7"/><path d="M4.500 9.200c2-.6 4-.5 6 .2M5 11.200c1.500.2 3 0 4.500-.5" stroke="#fde6c8" stroke-width=".9" fill="none"/></svg><span class="c c1"><span style="letter-spacing:-0.270px">home?hl=pl&amp;tab=wq</span></span><span class="c c6"><span style="letter-spacing:0.638px">http://</span><span style="letter-spacing:-.1px">picasaweb.google.pl/</span></span></div>
<div class="row" style="top:306px"><span class="cb"></span><svg class="fi" width="17" height="16" viewBox="0 0 17 16"><path d="M.3 7.800h2.500v5.700q-2.500 0-2.500-1.500z" fill="#2a2a48"/><path d="M2.800 8.300c2-.8 4-1.300 6-.8l5.800 1.200c1.500.4 1.400 1.700 0 1.900l-3.600.3c-1.200 1.600-5 2.200-8.200 1.900z" fill="#ee9c50" stroke="#a8561c" stroke-width=".7"/><path d="M4.500 9.200c2-.6 4-.5 6 .2M5 11.200c1.500.2 3 0 4.500-.5" stroke="#fde6c8" stroke-width=".9" fill="none"/></svg><span class="c c1"><span style="letter-spacing:-0.275px">?hl=pl&amp;tab=wo</span></span><span class="c c6"><span style="letter-spacing:0.638px">http://</span><span style="letter-spacing:-.1px">docs.google.com/</span></span></div>
<div class="row" style="top:323px"><span class="cb"></span><svg class="fi" width="17" height="16" viewBox="0 0 17 16"><path d="M.3 7.800h2.500v5.700q-2.500 0-2.500-1.500z" fill="#2a2a48"/><path d="M2.800 8.300c2-.8 4-1.300 6-.8l5.800 1.200c1.500.4 1.400 1.700 0 1.900l-3.600.3c-1.200 1.600-5 2.200-8.200 1.900z" fill="#ee9c50" stroke="#a8561c" stroke-width=".7"/><path d="M4.500 9.200c2-.6 4-.5 6 .2M5 11.200c1.500.2 3 0 4.500-.5" stroke="#fde6c8" stroke-width=".9" fill="none"/></svg><span class="c c1"><span style="letter-spacing:-0.275px">?hl=pl&amp;tab=w3</span></span><span class="c c6"><span style="letter-spacing:0.638px">http://</span><span style="letter-spacing:-.1px">www.google.pl/</span></span></div>
<div class="row" style="top:340px"><span class="cb"></span><svg class="fi" width="17" height="16" viewBox="0 0 17 16"><path d="M.3 7.800h2.500v5.700q-2.500 0-2.500-1.500z" fill="#2a2a48"/><path d="M2.800 8.300c2-.8 4-1.300 6-.8l5.800 1.200c1.500.4 1.400 1.700 0 1.900l-3.600.3c-1.200 1.600-5 2.200-8.200 1.900z" fill="#ee9c50" stroke="#a8561c" stroke-width=".7"/><path d="M4.500 9.200c2-.6 4-.5 6 .2M5 11.200c1.500.2 3 0 4.500-.5" stroke="#fde6c8" stroke-width=".9" fill="none"/></svg><span class="c c1"><span style="letter-spacing:-0.218px">grphp?hl=pl&amp;tab=wg</span></span><span class="c c6"><span style="letter-spacing:0.638px">http://</span><span style="letter-spacing:-.1px">groups.google.pl/</span></span></div>
 </div>
 <div class="vtrack"></div><div class="htrack"></div>
 <div class="abs" style="left:559px;top:377px;width:17px;height:17px;background:#f6f4ec"></div>
 <div class="sbtn" style="left:559px;top:0;height:16px"><svg width="13" height="13" viewBox="0 0 13 13"><path d="M3 9.500l3.500-3.500 3.500 3.500" stroke="#4d6185" stroke-width="2.300" fill="none"/></svg></div>
 <div class="thumb" style="left:559px;top:17px;width:15px;height:91px"><i class="abs" style="left:4px;top:41px;width:6px;height:7px;background:repeating-linear-gradient(to bottom,#eef3ff 0 1px,#8ea6dc 1px 2px)"></i></div>
 <div class="sbtn" style="left:559px;top:359px;height:16px"><svg width="13" height="13" viewBox="0 0 13 13"><path d="M3 5l3.500 3.500 3.500-3.500" stroke="#4d6185" stroke-width="2.300" fill="none"/></svg></div>
 <div class="sbtn" style="left:0;top:377px;width:16px;height:16px"><svg width="13" height="13" viewBox="0 0 13 13"><path d="M9 3l-3.500 3.500 3.500 3.500" stroke="#4d6185" stroke-width="2.300" fill="none"/></svg></div>
 <div class="thumb" style="left:17px;top:377px;width:295px;height:16px;background:linear-gradient(to bottom,#cad8fc,#b9c9f5)"><i class="abs" style="left:142px;top:4px;width:7px;height:6px;background:repeating-linear-gradient(to right,#eef3ff 0 1px,#8ea6dc 1px 2px)"></i></div>
 <div class="sbtn" style="left:541px;top:377px;width:16px;height:16px"><svg width="13" height="13" viewBox="0 0 13 13"><path d="M5 3l3.500 3.500-3.500 3.500" stroke="#4d6185" stroke-width="2.300" fill="none"/></svg></div>
</div></div>


<div id="pop"><div class="cap"><b><span style="letter-spacing:0.090px">Statystyki Grabbera IDM</span></b><span class="x"><svg width="11" height="11" viewBox="0 0 11 11"><path d="M2.500 2.500l6 6M8.500 2.500l-6 6" stroke="#fff" stroke-width="2"/></svg></span></div>
<div class="body">
<span class="pl" style="left:0;top:6px;width:167px;text-align:center"><span style="letter-spacing:-0.120px">Stan: Eksplorowanie</span></span>
<div class="hl1" style="left:8px;top:21px;width:151px"></div><div class="hl2" style="left:8px;top:22px;width:151px"></div>
<span class="pl" style="left:12px;top:27px"><span style="letter-spacing:-0.215px">Strony przetworzone</span></span>
<span class="pr" style="right:79px;top:43px"><span style="letter-spacing:-0.250px">Proste:</span></span><span class="pl" style="left:99px;top:45px">2</span>
<span class="pr" style="right:79px;top:56px"><span style="letter-spacing:-0.124px">Zaawansowane:</span></span><span class="pl" style="left:99px;top:58px">0</span>
<div class="hl1" style="left:8px;top:73px;width:151px"></div><div class="hl2" style="left:8px;top:74px;width:151px"></div>
<span class="pl" style="left:12px;top:79px"><span style="letter-spacing:0.006px">Pliki</span></span>
<span class="pr" style="right:75px;top:95px"><span style="letter-spacing:-0.286px">Ogólnie:</span></span><span class="pl" style="left:99px;top:95px">75</span>
<span class="pr" style="right:75px;top:108px"><span style="letter-spacing:-0.181px">Eksplorowane:</span></span><span class="pl" style="left:99px;top:108px">4</span>
<span class="pr" style="right:75px;top:121px"><span style="letter-spacing:-0.168px">Pasujące:</span></span><span class="pl" style="left:99px;top:121px">4</span>
<span class="pr" style="right:75px;top:134px"><span style="letter-spacing:-0.131px">Ściągnięte:</span></span><span class="pl" style="left:99px;top:134px">0</span>
</div></div>
<div class="hl1" style="left:14px;top:501px;width:741px"></div><div class="hl2" style="left:14px;top:502px;width:741px"></div>
<div class="sq" style="left:31px;top:515px;width:17px;height:17px;background:#0a3cf0;border-color:#dfe3f0"></div><div class="sq" style="left:61px"></div><div class="sq" style="left:91px"></div><div class="sq" style="left:121px"></div><div class="sq" style="left:151px"></div>
<div class="btn" style="left:380px;top:514px;width:88px;box-shadow:inset 0 0 0 1px #c6d6f4,inset -1px -1px 0 1px #9cb6ea"><span style="letter-spacing:-0.226px">&lt; Cofnij</span></div>
<div class="btn" style="left:479px;top:514px;width:88px;border-color:#c9c7ba;color:#aca899;background:#f5f4ea"><span style="letter-spacing:-0.292px">Dalej &gt;</span></div>
<div class="btn" style="left:667px;top:514px;width:88px"><span style="letter-spacing:-0.045px">Zamknij</span></div>
</div>
</body></html>
